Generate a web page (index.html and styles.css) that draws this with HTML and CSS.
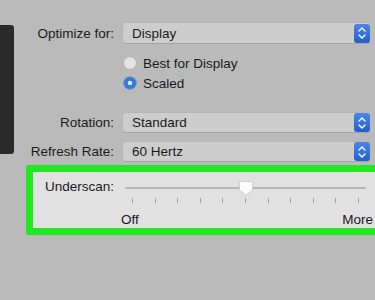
FILE: index.html
```html
<!DOCTYPE html>
<html>
<head>
<meta charset="utf-8">
<link rel="stylesheet" href="styles.css">
</head>
<body>
<div class="top">
  <div class="sidebar"></div>
  <div class="form">
    <div class="label">Optimize for:</div>
    <div class="popup"><span>Display</span><span class="stepper"><svg width="16" height="20" viewBox="0 0 16 20"><path d="M5 8 L8 5 L11 8 M5 12 L8 15 L11 12" fill="none" stroke="#fff" stroke-width="1.4" stroke-linecap="round" stroke-linejoin="round"/></svg></span></div>

    <div class="label"></div>
    <div class="radios">
      <div class="radio"><span class="dot"></span>Best for Display</div>
      <div class="radio"><span class="dot on"></span>Scaled</div>
    </div>

    <div class="label rot">Rotation:</div>
    <div class="popup rot"><span>Standard</span><span class="stepper"><svg width="16" height="20" viewBox="0 0 16 20"><path d="M5 8 L8 5 L11 8 M5 12 L8 15 L11 12" fill="none" stroke="#fff" stroke-width="1.4" stroke-linecap="round" stroke-linejoin="round"/></svg></span></div>

    <div class="label ref">Refresh Rate:</div>
    <div class="popup ref"><span>60 Hertz</span><span class="stepper"><svg width="16" height="20" viewBox="0 0 16 20"><path d="M5 8 L8 5 L11 8 M5 12 L8 15 L11 12" fill="none" stroke="#fff" stroke-width="1.4" stroke-linecap="round" stroke-linejoin="round"/></svg></span></div>
  </div>
</div>
<div class="highlight">
  <div class="inner">
    <div class="uscan">Underscan:</div>
    <div class="slider">
      <div class="track"></div>
      <div class="ticks">
        <i></i><i></i><i></i><i></i><i></i><i></i><i></i><i></i><i></i><i></i><i></i>
      </div>
      <svg class="thumb" width="16" height="17" viewBox="0 0 16 17"><path d="M2.5 1.5 H13.5 Q14.5 1.5 14.5 2.5 V10 L8 15.5 L1.5 10 V2.5 Q1.5 1.5 2.5 1.5 Z" fill="#fbfbfb" stroke="#c4c4c4" stroke-width="0.8"/></svg>
      <div class="ends"><span>Off</span><span>More</span></div>
    </div>
  </div>
</div>
</body>
</html>
```
FILE: styles.css
```css
html, body {
  margin: 0;
  padding: 0;
}
body {
  width: 375px;
  height: 300px;
  overflow: hidden;
  background: #bababa;
  font-family: "Liberation Sans", Arial, sans-serif;
  font-size: 13.5px;
  color: #1a1a1a;
}
.top {
  display: flex;
  align-items: flex-start;
}
.sidebar {
  width: 14px;
  height: 129px;
  margin-top: 25px;
  background: #2a2a2a;
  border-radius: 0 3px 3px 0;
  flex: none;
}
.form {
  display: grid;
  grid-template-columns: 100px 247px;
  column-gap: 9px;
  padding-top: 23px;
  align-items: center;
}
.label {
  text-align: right;
  white-space: nowrap;
}
.popup {
  height: 20px;
  background: #cdcdcd;
  border-radius: 3px;
  box-shadow: 0 1px 0 #a3a3a3, 0 0 0 0.5px #b3b3b3;
  display: flex;
  align-items: center;
  justify-content: space-between;
  padding-left: 9px;
  box-sizing: border-box;
}
.stepper {
  width: 16px;
  height: 19px;
  border-radius: 3px;
  background: linear-gradient(#4a86e6, #225fcb);
  display: flex;
  align-items: center;
  justify-content: center;
}
.stepper svg {
  display: block;
}
.popup.rot, .label.rot {
  margin-top: 20px;
}
.popup.ref, .label.ref {
  margin-top: 10px;
}
.popup.rot, .popup.ref {
  height: 19px;
}
.radios {
  display: flex;
  flex-direction: column;
  padding-top: 10px;
  margin-left: 1px;
}
.radio {
  height: 20px;
  display: flex;
  align-items: center;
  gap: 7px;
}
.dot {
  width: 12px;
  height: 12px;
  border-radius: 50%;
  background: #e4e4e4;
  box-shadow: 0 0 0 0.5px #b0b0b0;
  flex: none;
}
.dot.on {
  background: radial-gradient(circle, #cfe6ff 0 2px, #3778db 2.6px);
  box-shadow: 0 0 0 0.5px #2a5fb8;
}
.highlight {
  margin: 4px 0 0 26px;
  width: 360px;
  height: 70px;
  box-sizing: border-box;
  border: 7px solid #22e822;
  border-radius: 2px;
  background: #e1e1e1;
}
.inner {
  display: flex;
  padding: 8px 0 0 12px;
}
.uscan {
  width: 80px;
  flex: none;
  line-height: 14px;
}
.slider {
  position: relative;
  width: 241px;
  padding-top: 7px;
}
.track {
  height: 2px;
  background: #b7b7b7;
  border-radius: 1px;
}
.ticks {
  display: flex;
  justify-content: space-between;
  padding: 9px 7px 0;
}
.ticks i {
  display: block;
  width: 1px;
  height: 5px;
  background: #a0a0a0;
}
.thumb {
  position: absolute;
  left: 113px;
  top: 0;
}
.ends {
  display: flex;
  justify-content: space-between;
  margin: 9px -7px 0 -4px;
}
```
